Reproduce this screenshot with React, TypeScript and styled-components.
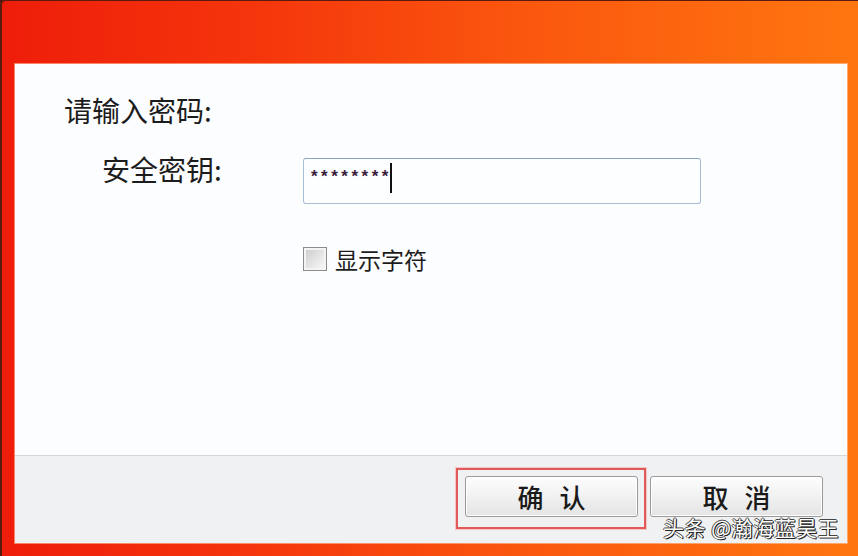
import React from "react";
import styled, { createGlobalStyle, css } from "styled-components";

const GlobalStyle = createGlobalStyle`
  html, body {
    margin: 0;
    padding: 0;
    background: #1b1b1b;
  }
  * {
    box-sizing: border-box;
  }
`;

const cjk = `"Noto Sans CJK SC", "Noto Sans", sans-serif`;

const Frame = styled.div`
  position: relative;
  width: 858px;
  height: 556px;
  padding: 64px 11px 13px 15px;
  background: linear-gradient(90deg, #ee1d0a 0%, #f5360c 30%, #fa560e 60%, #ff7610 100%);
  border-top-left-radius: 4px;
  box-shadow: inset 2px 1px 0 #5a1a10;
  font-family: ${cjk};
  color: #1c1c1c;
`;

const Panel = styled.div`
  display: flex;
  flex-direction: column;
  height: 100%;
  background: #fcfdff;
  box-shadow: 0 0 0 1px rgba(255, 200, 170, 0.6);
`;

const Body = styled.div`
  flex: 1;
  display: flex;
  flex-direction: column;
  padding: 31px 0 0 49px;
`;

const Title = styled.div`
  font-size: 28px;
  line-height: 30px;
`;

const FieldRow = styled.div`
  display: flex;
  align-items: flex-start;
  margin-top: 29px;
  padding-left: 38px;
`;

const FieldLabel = styled.div`
  width: 201px;
  font-size: 28px;
  line-height: 30px;
`;

const PasswordBox = styled.div`
  display: flex;
  align-items: flex-start;
  width: 398px;
  height: 46px;
  margin-top: 4px;
  padding: 4px 0 0 7px;
  background: #fdfeff;
  border: 1px solid #a8bed6;
  border-top-color: #8aa3bf;
  border-radius: 3px;
`;

const Masked = styled.span`
  font-family: "Liberation Sans", sans-serif;
  font-weight: bold;
  font-size: 17px;
  line-height: 20px;
  letter-spacing: 3.5px;
  color: #3a1c3c;
  margin-top: 4px;
`;

const Caret = styled.span`
  width: 2px;
  height: 30px;
  margin-left: -2px;
  background: #111;
`;

const CheckRow = styled.label`
  display: flex;
  align-items: center;
  gap: 8px;
  margin: 42px 0 0 239px;
`;

const CheckBox = styled.span`
  width: 24px;
  height: 24px;
  border: 1px solid #8c8c8c;
  box-shadow: inset 0 0 0 2px #f4f4f4;
  background: linear-gradient(135deg, #c9c9c9 0%, #e6e6e6 55%, #fafafa 100%);
`;

const CheckText = styled.span`
  font-size: 23px;
  line-height: 26px;
`;

const Footer = styled.div`
  display: flex;
  justify-content: flex-end;
  align-items: flex-start;
  gap: 12px;
  height: 88px;
  padding: 20px 24px 0 0;
  background: #f0f1f2;
  border-top: 1px solid #d6d7d9;
`;

const Button = styled.button<{ $highlighted?: boolean }>`
  position: relative;
  width: 173px;
  height: 41px;
  padding: 0;
  border: 1px solid #9a9a9a;
  border-radius: 3px;
  background: linear-gradient(180deg, #fdfdfd 0%, #f1f1f1 50%, #e4e4e4 100%);
  box-shadow: inset 0 0 0 1px #fff;
  font-family: ${cjk};
  font-size: 26px;
  font-weight: 500;
  line-height: 38px;
  word-spacing: 10px;
  color: #1a1a1a;

  ${(p) =>
    p.$highlighted &&
    css`
      &::after {
        content: "";
        position: absolute;
        left: -10px;
        right: -9px;
        top: -9px;
        bottom: -13px;
        border: 2px solid #e05a5a;
        box-shadow: 0 0 0 1px #f6c4c4;
        pointer-events: none;
      }
    `}
`;

const Watermark = styled.div`
  position: absolute;
  left: 663px;
  top: 514px;
  font-size: 21px;
  line-height: 26px;
  color: #fff;
  letter-spacing: 0.5px;
  text-shadow: 1px 1px 0 #222, -1px 0 0 #444, 0 -1px 0 #444, 1px 0 0 #333;
`;

export default function App() {
  return (
    <>
      <GlobalStyle />
      <Frame>
        <Panel>
          <Body>
            <Title>请输入密码:</Title>
            <FieldRow>
              <FieldLabel>安全密钥:</FieldLabel>
              <PasswordBox>
                <Masked>********</Masked>
                <Caret />
              </PasswordBox>
            </FieldRow>
            <CheckRow>
              <CheckBox />
              <CheckText>显示字符</CheckText>
            </CheckRow>
          </Body>
          <Footer>
            <Button $highlighted>确 认</Button>
            <Button>取 消</Button>
          </Footer>
        </Panel>
        <Watermark>头条 @瀚海蓝昊王</Watermark>
      </Frame>
    </>
  );
}
